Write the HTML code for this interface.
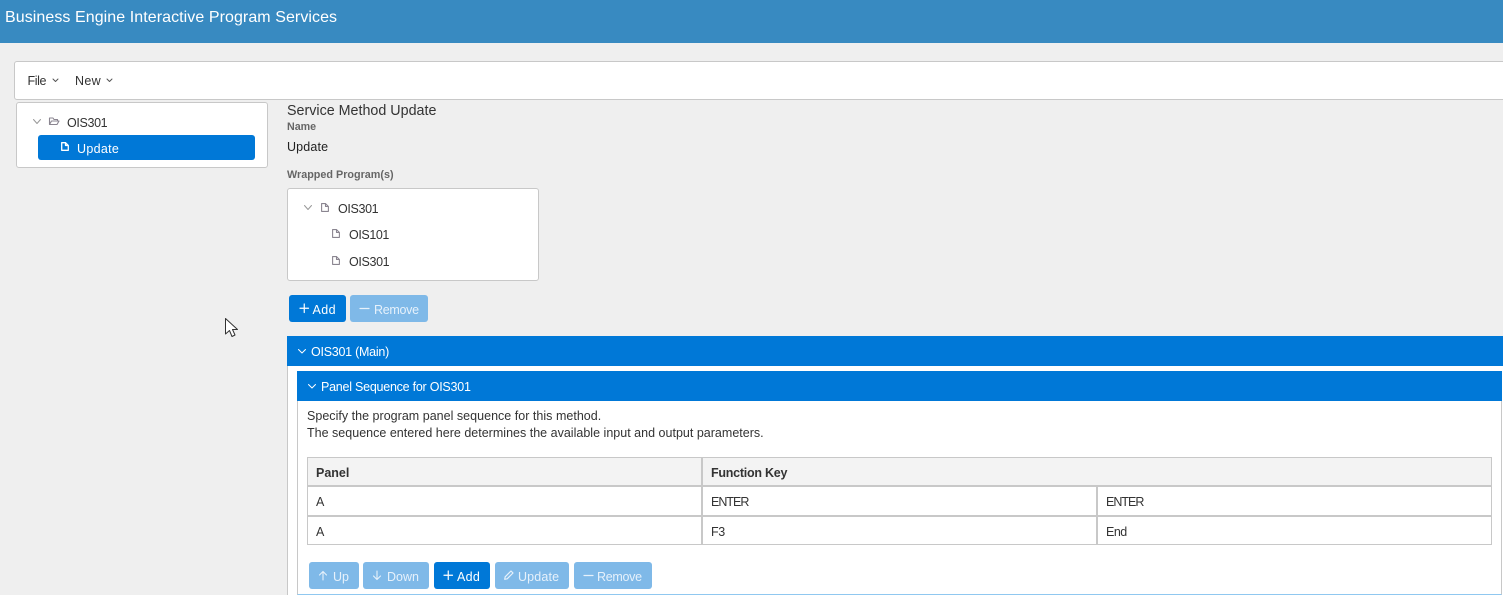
<!DOCTYPE html>
<html><head><meta charset="utf-8">
<style>
html,body{margin:0;padding:0;width:1503px;height:595px;overflow:hidden;background:#efefef}
body{position:relative;font-family:"Liberation Sans",sans-serif;font-size:12.5px;color:#333}
.a{position:absolute;box-sizing:border-box}
.t{position:absolute;white-space:nowrap;line-height:16px;height:16px}
.box{position:absolute;box-sizing:border-box;background:#fff;border:1px solid #c8c8c8;border-radius:3px}
.btn{position:absolute;box-sizing:border-box;background:#0078d7;border-radius:3px;height:27px;color:#fff}
.btn.off{background:#7fb9e8}
.btn span{position:absolute;top:7px;line-height:16px;white-space:nowrap;font-size:12.5px}
.btn.off span{color:#e6f1fb}
.bar{position:absolute;background:#0078d7;height:30px;color:#fff}
.g{position:absolute;background:#c8c8c8}
svg{position:absolute;overflow:visible;fill:none;stroke-linejoin:round;stroke-linecap:round}
</style></head><body>

<div class="a" style="left:0;top:0;width:1503px;height:43px;background:#388ac1"></div>
<div class="t" style="left:5px;top:9px;font-size:16px;line-height:18px;height:18px;color:#fff;letter-spacing:.07px">Business Engine Interactive Program Services</div>

<div class="box" style="left:14px;top:61px;width:1500px;height:39px"></div>
<div class="t" style="left:27.5px;top:73px;color:#333;letter-spacing:-.4px">File</div>
<svg style="left:52px;top:78px" width="7" height="5" stroke="#555" stroke-width="1"><path d="M1 1L3.5 3.5L6 1"/></svg>
<div class="t" style="left:75px;top:73px;color:#333;letter-spacing:.3px">New</div>
<svg style="left:106px;top:78px" width="7" height="5" stroke="#555" stroke-width="1"><path d="M1 1L3.5 3.5L6 1"/></svg>

<div class="box" style="left:16px;top:102px;width:252px;height:66px"></div>
<svg style="left:33px;top:119px" width="9" height="6" stroke="#999" stroke-width="1"><path d="M.5 .5L4 4.5L7.5 .5"/></svg>
<svg style="left:49px;top:117px" width="11" height="9" stroke="#8a8590" stroke-width="1.1"><path d="M.5 7.5V1H4L5 2.5H8.5V4M.5 7.5L2.5 4H10L8 7.5Z"/></svg>
<div class="t" style="left:67px;top:115px;color:#333;letter-spacing:-.35px">OIS301</div>
<div class="a" style="left:38px;top:135px;width:217px;height:25px;background:#0078d7;border-radius:3px"></div>
<svg style="left:61px;top:142px" width="8" height="10" stroke="#fff" stroke-width="1.3"><path d="M.7 .7H4.5L7.3 3.5V8.3H.7ZM4.5 .7V3.5H7.3"/></svg>
<div class="t" style="left:77px;top:141px;color:#fff;letter-spacing:.3px">Update</div>

<div class="t" style="left:287px;top:103px;font-size:14.3px;color:#333">Service Method Update</div>
<div class="t" style="left:287px;top:119px;font-size:10.7px;font-weight:bold;color:#666">Name</div>
<div class="t" style="left:287px;top:139px;font-size:12.5px;color:#222;letter-spacing:.15px">Update</div>
<div class="t" style="left:287px;top:167px;font-size:10.8px;font-weight:bold;color:#666">Wrapped Program(s)</div>

<div class="box" style="left:287px;top:188px;width:252px;height:93px"></div>
<svg style="left:304px;top:205px" width="9" height="6" stroke="#999" stroke-width="1"><path d="M.5 .5L4 4.5L7.5 .5"/></svg>
<svg style="left:321px;top:203px" width="8" height="10" stroke="#8a8590" stroke-width="1.1"><path d="M.6 .6H4.5L7.4 3.5V8.4H.6ZM4.5 .6V3.5H7.4"/></svg>
<div class="t" style="left:338px;top:201px;letter-spacing:-.35px">OIS301</div>
<svg style="left:332px;top:229px" width="8" height="10" stroke="#8a8590" stroke-width="1.1"><path d="M.6 .6H4.5L7.4 3.5V8.4H.6ZM4.5 .6V3.5H7.4"/></svg>
<div class="t" style="left:349px;top:227px;letter-spacing:-.4px">OIS101</div>
<svg style="left:332px;top:256px" width="8" height="10" stroke="#8a8590" stroke-width="1.1"><path d="M.6 .6H4.5L7.4 3.5V8.4H.6ZM4.5 .6V3.5H7.4"/></svg>
<div class="t" style="left:349px;top:254px;letter-spacing:-.35px">OIS301</div>

<div class="btn" style="left:289px;top:295px;width:57px"><svg style="left:11px;top:9px" width="8.5" height="8.5" stroke="#fff" stroke-width="1.2"><path d="M4.25 0V8.5M0 4.25H8.5"/></svg><span style="left:23.5px;letter-spacing:.4px">Add</span></div>
<div class="btn off" style="left:350px;top:295px;width:78px"><svg style="left:10px;top:9px" width="9" height="9" stroke="#e6f1fb" stroke-width="1.2"><path d="M0 4.5H9"/></svg><span style="left:24px;letter-spacing:-.3px">Remove</span></div>

<svg style="left:225px;top:318px" width="13" height="20" stroke="#333" stroke-width="1"><path d="M.5 .5V16L4.5 12.5L7 18.5L10 17L7.5 11.5H12.5Z" fill="#fff"/></svg>

<div class="a" style="left:287px;top:366px;width:1216px;height:229px;background:#fff;border-left:1px solid #c8c8c8"></div>
<div class="bar" style="left:287px;top:336px;width:1216px"></div>
<svg style="left:298px;top:349px" width="8" height="5" stroke="#fff" stroke-width="1"><path d="M.5 .5L4 4L7.5 .5"/></svg>
<div class="t" style="left:311px;top:344px;color:#fff;letter-spacing:-.25px">OIS301 (Main)</div>

<div class="a" style="left:297px;top:401px;width:1205px;height:194px;background:#fff;border-left:1px solid #c8c8c8;border-right:1px solid #c8c8c8;border-bottom:1px solid #90c8f0"></div>
<div class="bar" style="left:297px;top:371px;width:1205px"></div>
<svg style="left:308px;top:384px" width="8" height="5" stroke="#fff" stroke-width="1"><path d="M.5 .5L4 4L7.5 .5"/></svg>
<div class="t" style="left:321px;top:379px;color:#fff;letter-spacing:-.24px">Panel Sequence for OIS301</div>

<div class="t" style="left:307px;top:408px;color:#333;letter-spacing:.02px">Specify the program panel sequence for this method.</div>
<div class="t" style="left:307px;top:425px;color:#333;letter-spacing:.01px">The sequence entered here determines the available input and output parameters.</div>

<div class="a" style="left:307px;top:457px;width:1185px;height:88px;background:#fff"></div>
<div class="a" style="left:307px;top:457px;width:1185px;height:29px;background:#f3f3f3"></div>
<div class="g" style="left:307px;top:457px;width:1185px;height:1px"></div>
<div class="g" style="left:307px;top:485px;width:1185px;height:2px"></div>
<div class="g" style="left:307px;top:515px;width:1185px;height:2px"></div>
<div class="g" style="left:307px;top:544px;width:1185px;height:1px"></div>
<div class="g" style="left:307px;top:457px;width:1px;height:88px"></div>
<div class="g" style="left:1491px;top:457px;width:1px;height:88px"></div>
<div class="g" style="left:701px;top:457px;width:2px;height:88px"></div>
<div class="g" style="left:1096px;top:486px;width:2px;height:59px"></div>

<div class="t" style="left:316px;top:465px;font-weight:bold;color:#333">Panel</div>
<div class="t" style="left:711px;top:465px;font-weight:bold;color:#333;letter-spacing:-.25px">Function Key</div>
<div class="t" style="left:316px;top:494px">A</div>
<div class="t" style="left:711px;top:494px;letter-spacing:-1px">ENTER</div>
<div class="t" style="left:1106px;top:494px;letter-spacing:-1px">ENTER</div>
<div class="t" style="left:316px;top:524px">A</div>
<div class="t" style="left:711px;top:524px;letter-spacing:-.4px">F3</div>
<div class="t" style="left:1106px;top:524px;letter-spacing:-.5px">End</div>

<div class="btn off" style="left:309px;top:562px;width:50px"><svg style="left:10px;top:9px" width="8" height="9" stroke="#e6f1fb" stroke-width="1.1"><path d="M4 9V.5M.5 4L4 .5L7.5 4"/></svg><span style="left:24px">Up</span></div>
<div class="btn off" style="left:363px;top:562px;width:66px"><svg style="left:10px;top:9px" width="8" height="9" stroke="#e6f1fb" stroke-width="1.1"><path d="M4 0V8.5M.5 5L4 8.5L7.5 5"/></svg><span style="left:24px">Down</span></div>
<div class="btn" style="left:434px;top:562px;width:56px"><svg style="left:10px;top:9px" width="8.5" height="8.5" stroke="#fff" stroke-width="1.2"><path d="M4.25 0V8.5M0 4.25H8.5"/></svg><span style="left:23px;letter-spacing:.3px">Add</span></div>
<div class="btn off" style="left:495px;top:562px;width:74px"><svg style="left:9px;top:8px" width="10" height="10" stroke="#e6f1fb" stroke-width="1.2"><path d="M.7 9.3L1.2 6.8L7 1L9 3L3.2 8.8Z"/></svg><span style="left:23px;letter-spacing:.15px">Update</span></div>
<div class="btn off" style="left:574px;top:562px;width:78px"><svg style="left:9.5px;top:9px" width="9" height="9" stroke="#e6f1fb" stroke-width="1.2"><path d="M0 4.5H9"/></svg><span style="left:23px;letter-spacing:-.3px">Remove</span></div>

</body></html>
